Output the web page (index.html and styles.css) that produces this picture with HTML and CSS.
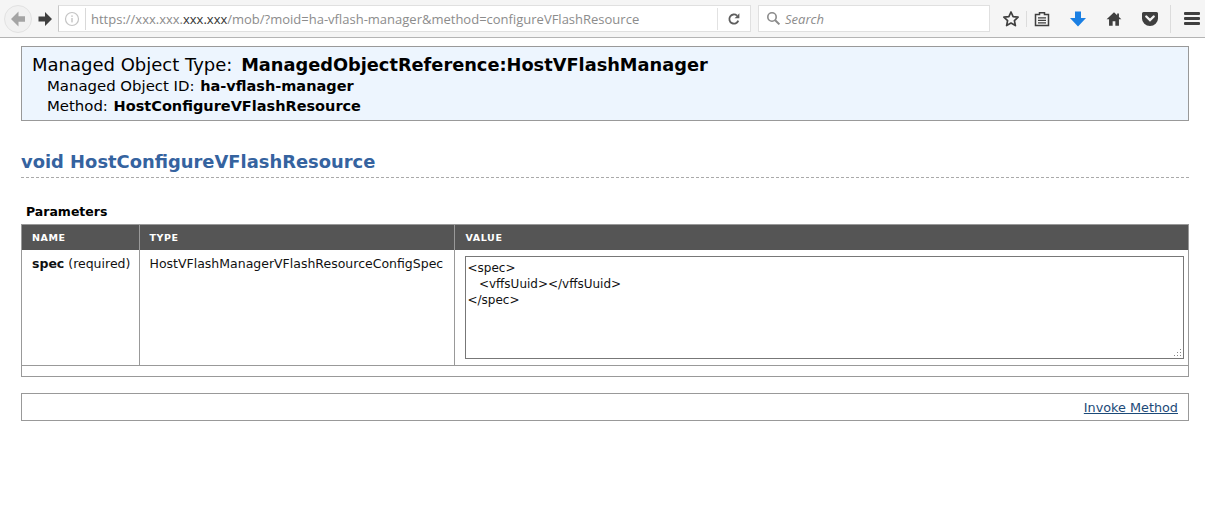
FILE: index.html
```html
<!DOCTYPE html>
<html lang="en">
<head>
<meta charset="utf-8">
<title>Managed Object</title>
<link rel="stylesheet" href="styles.css">
</head>
<body>
<header class="toolbar">
  <div class="nav">
    <span class="back"><svg width="18" height="18" viewBox="0 0 18 18"><path d="M9.500 1.500 2 9l7.500 7.500V11.800H16V6.200H9.500z" fill="#a4a4a4"/></svg></span>
    <span class="forward"><svg width="16" height="16" viewBox="0 0 16 16"><path d="M8 1l7 7-7 7v-4.500H1.500v-5H8z" fill="#3f3f3f"/></svg></span>
  </div>
  <div class="urlbar">
    <svg class="info" width="16" height="16" viewBox="0 0 16 16"><circle cx="8" cy="8" r="6.500" fill="none" stroke="#c4c4c4" stroke-width="1.200"/><rect x="7.300" y="7" width="1.400" height="4.400" fill="#c4c4c4"/><rect x="7.300" y="4.400" width="1.400" height="1.500" fill="#c4c4c4"/></svg>
    <span class="url">https://xxx.xxx.<b class="host">xxx.xxx</b>/mob/?moid=ha-vflash-manager&amp;method=configureVFlashResource</span>
    <span class="reload"><svg width="14" height="14" viewBox="0 0 14 14"><path d="M11.300 8.600A4.600 4.600 0 1 1 10 3.600" fill="none" stroke="#5e5e5e" stroke-width="1.800"/><path d="M12.400 1.200v5H7.600z" fill="#5e5e5e"/></svg></span>
  </div>
  <div class="search">
    <svg width="15" height="15" viewBox="0 0 15 15"><circle cx="6" cy="6" r="4.200" fill="none" stroke="#8a8a8a" stroke-width="1.600"/><path d="M9.200 9.200l4.200 4.200" stroke="#8a8a8a" stroke-width="2"/></svg>
    <span class="search-text">Search</span>
  </div>
  <div class="tools">
    <svg class="star" width="18" height="18" viewBox="0 0 18 18"><path d="M9 2l2.100 4.600 5 .6-3.700 3.400 1 5L9 13.100 4.600 15.600l1-5L1.900 7.200l5-.6z" fill="none" stroke="#3f3f3f" stroke-width="1.700" stroke-linejoin="round"/></svg>
    <i class="sep"></i>
    <svg class="clip" width="16" height="16" viewBox="0 0 16 16"><path d="M1.500 3.500h4V1.800h5v1.700h4v11h-13z" fill="none" stroke="#3f3f3f" stroke-width="1.500"/><path d="M4 6.300h8v1.300H4zM4 8.800h8v1.300H4zM4 11.200h8v1.300H4z" fill="#3f3f3f"/></svg>
    <svg class="down" width="18" height="18" viewBox="0 0 18 18"><path d="M6 1.500h6v6.500h5L9 16.500 1 8h5z" fill="#1a7fe3"/></svg>
    <svg class="home" width="18" height="18" viewBox="-1 -1 20 20"><path d="M9 1.500.8 9.300h2.700V16.500h4v-5h3v5h4V9.300h2.700l-2.700-2.600V3h-2v1.800z" fill="#3f3f3f"/></svg>
    <svg class="pocket" width="18" height="18" viewBox="0 0 18 18"><path d="M2.500 2h13a1.500 1.500 0 0 1 1.500 1.500V8.500a8 7.500 0 0 1-16 0V3.500A1.500 1.500 0 0 1 2.500 2z" fill="#3f3f3f"/><path d="M5.300 6.500 9 10 12.700 6.500" fill="none" stroke="#f5f5f5" stroke-width="2.400" stroke-linecap="round"/></svg>
    <i class="sep sep-menu"></i>
    <span class="menu"><i></i><i></i><i></i></span>
  </div>
</header>
<main class="page">
  <section class="summary">
    <div class="summary-title">Managed Object Type: <b>ManagedObjectReference:HostVFlashManager</b></div>
    <div class="summary-line">Managed Object ID: <b>ha-vflash-manager</b></div>
    <div class="summary-line">Method: <b>HostConfigureVFlashResource</b></div>
  </section>
  <h1 class="method">void HostConfigureVFlashResource</h1>
  <h2 class="params">Parameters</h2>
  <div class="table-wrap">
    <table class="table">
      <thead>
        <tr><th class="col-name">NAME</th><th class="col-type">TYPE</th><th class="col-value">VALUE</th></tr>
      </thead>
      <tbody>
        <tr>
          <td class="nowrap"><b>spec</b> (required)</td>
          <td>HostVFlashManagerVFlashResourceConfigSpec</td>
          <td class="value-cell"><div class="textarea">&lt;spec&gt;
   &lt;vffsUuid&gt;&lt;/vffsUuid&gt;
&lt;/spec&gt;<svg class="grip" width="9" height="9" viewBox="0 0 9 9"><path d="M7 1h1v1H7zM4 4h1v1H4zM7 4h1v1H7zM1 7h1v1H1zM4 7h1v1H4zM7 7h1v1H7z" fill="#888"/></svg></div></td>
        </tr>
      </tbody>
    </table>
  </div>
  <div class="invoke"><a href="#">Invoke Method</a></div>
</main>
</body>
</html>
```
FILE: styles.css
```css
* { box-sizing: border-box; }
html, body { margin: 0; padding: 0; background: #fff; }
body { font-family: "DejaVu Sans", Verdana, sans-serif; color: #000; overflow: hidden; }

.toolbar {
  height: 38px;
  display: flex;
  align-items: center;
  background: #f5f5f5;
  border-bottom: 1px solid #b4b4b4;
  padding: 0 0 0 4px;
  font-family: "Open Sans", sans-serif;
}
.nav { display: flex; align-items: center; width: 54px; height: 28px; flex: none; }
.back {
  width: 28px; height: 28px; border-radius: 50%;
  border: 1px solid #e2e2e2; background: #f1f1f1;
  display: flex; align-items: center; justify-content: center;
}
.forward { width: 26px; display: flex; justify-content: center; }
.urlbar {
  width: 693px; height: 27px; flex: none;
  background: #fff; border: 1px solid #e0e0e0; border-left: 1px solid #c8c8c8;
  display: flex; align-items: center; padding-left: 5px;
}
.info { flex: none; }
.url {
  margin-left: 5px; padding-left: 5px; border-left: 1px solid #d9d9d9;
  font-size: 13px; line-height: 22px; color: #8c8c8c; flex: 1; white-space: nowrap;
}
.host { font-weight: 400; color: #333; }
.reload {
  width: 33px; height: 22px; border-left: 1px solid #e2e2e2;
  display: flex; align-items: center; justify-content: center; flex: none;
}
.search {
  width: 232px; height: 27px; margin-left: 7px; flex: none;
  background: #fff; border: 1px solid #e0e0e0;
  display: flex; align-items: center; padding-left: 7px; gap: 4px;
}
.search-text { font-size: 13px; font-style: italic; color: #8c8c8c; }
.tools { display: flex; align-items: center; flex: 1; height: 28px; padding-left: 12px; }
.sep { width: 1px; height: 16px; background: #dcdcdc; flex: none; }
.star { margin-right: 6px; }
.sep { margin-right: 7px; }
.clip { margin-right: 19px; }
.down { margin-right: 18px; }
.home { margin-right: 18px; }
.pocket { margin-right: 11px; }
.sep-menu { height: 28px; margin-right: 13px; }
.menu { display: flex; flex-direction: column; gap: 2px; width: 16px; }
.menu i { display: block; height: 3px; background: #3f3f3f; border-radius: 1px; }

.page { padding: 8px 16px 0 21px; }
.summary {
  height: 75px;
  background: #edf5fe;
  border: 1px solid #999;
  padding: 6px 10px;
}
.summary-title { font-size: 18px; line-height: 24px; height: 23px; }
.summary-title b { font-size: 17.770px; margin-left: 3px; }
.summary-line { font-size: 14.900px; line-height: 20px; padding-left: 15px; }
.summary-line b { font-size: 14.500px; margin-left: 1px; }
.method {
  margin: 29px 0 0;
  font-size: 17.900px; line-height: 24px; font-weight: 700;
  color: #35639f;
  height: 28px;
  border-bottom: 1px dashed #aaa;
}
.params { margin: 26px 0 0 5px; font-size: 12.500px; line-height: 16px; font-weight: 700; }
.table-wrap { margin-top: 4px; height: 153px; border: 1px solid #999; border-top: 0; }
.table { width: 100%; border-collapse: collapse; table-layout: fixed; font-size: 12.500px; }
.table th {
  height: 25px; padding: 1px 10px 0; text-align: left;
  background: #555; color: #fff; font-size: 9.500px; letter-spacing: .6px; font-weight: 700;
  border-left: 1px solid #999; border-top: 1px solid #999;
}
.table th:first-child { border-left: 0; }
.table th.col-value { padding-left: 11px; }
.col-name { width: 117px; }
.col-type { width: 315px; }
.table td {
  height: 116px; vertical-align: top; padding: 6px 10px;
  line-height: 16px; color: #111;
  border-left: 1px solid #999; border-bottom: 1px solid #999;
}
.table td:first-child { border-left: 0; }
.table td.nowrap { white-space: nowrap; }
.table td.value-cell { padding: 6px 4px 6px 10px; }
.textarea {
  position: relative; height: 103px; border: 1px solid #777;
  padding: 3px 2px; white-space: pre; font-size: 12px; line-height: 16px;
}
.grip { position: absolute; right: 1px; bottom: 1px; }
.invoke {
  margin-top: 16px; height: 28px; border: 1px solid #999;
  display: flex; align-items: center; justify-content: flex-end; padding-right: 10px;
  font-size: 12.800px;
}
.invoke a { color: #1c4a78; }
```
